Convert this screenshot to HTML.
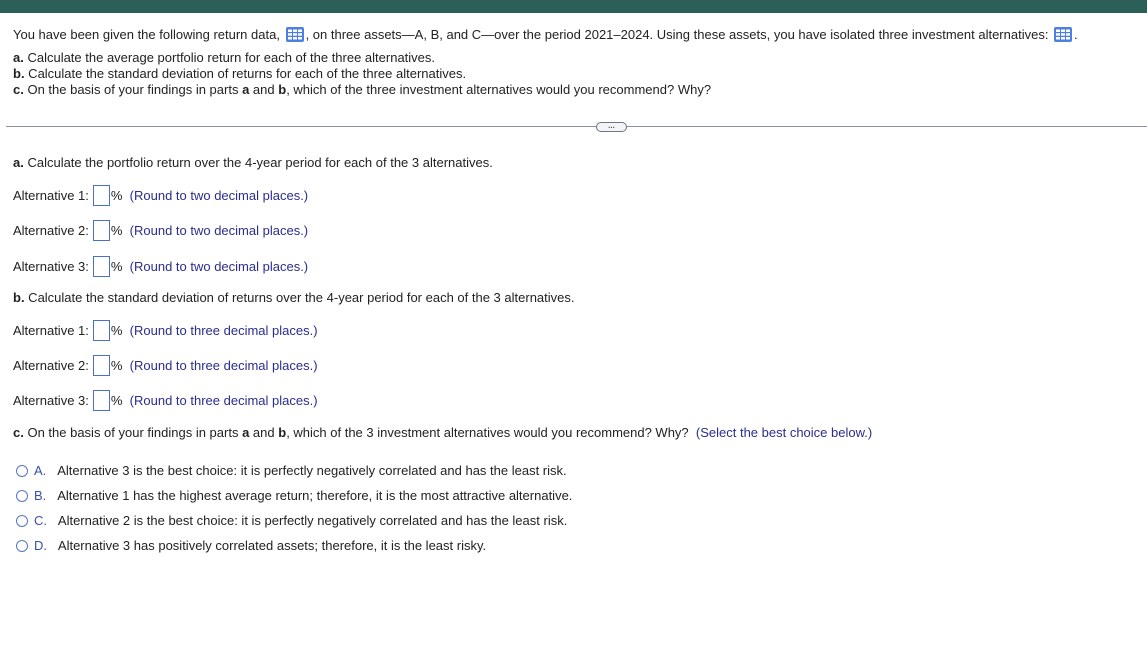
<!DOCTYPE html>
<html><head><style>
body{margin:0;width:1147px;height:671px;background:#fff;font-family:"Liberation Sans",Arial,sans-serif;font-size:13px;color:#222;position:relative;overflow:hidden}
.bar{position:absolute;left:0;top:0;width:1147px;height:13px;background:#2d5f59}
.t{position:absolute;left:13px;white-space:nowrap;line-height:16px}
.blue{color:#2a2d8f}
.box{display:inline-block;width:15px;height:19px;border:1px solid #4b6fd0;vertical-align:middle;margin:0 1px 0 4px;position:relative;top:-1px}
.ic{display:inline-block;width:18px;height:15px;vertical-align:middle;position:relative;top:-1px;margin:0 2px}
.rad{display:inline-block;width:10px;height:10px;border:1.3px solid #5577c8;border-radius:50%;vertical-align:middle;margin-right:6px;position:relative;top:-1px}
.lt{color:#3a4fa8;margin-right:8px}
</style></head><body>
<div class="bar"></div>
<div class="t" style="top:27px">You have been given the following return data, <svg class="ic" viewBox="0 0 18 15"><rect x="0" y="0" width="18" height="15" rx="2" fill="#4d7ee0"/><g fill="#fff"><rect x="2" y="2.5" width="4" height="2.5"/><rect x="7" y="2.5" width="4" height="2.5"/><rect x="12" y="2.5" width="4" height="2.5"/><rect x="2" y="6.2" width="4" height="2.5"/><rect x="7" y="6.2" width="4" height="2.5"/><rect x="12" y="6.2" width="4" height="2.5"/><rect x="2" y="10" width="4" height="2.5"/><rect x="7" y="10" width="4" height="2.5"/><rect x="12" y="10" width="4" height="2.5"/></g></svg>, on three assets—A, B, and C—over the period 2021–2024. Using these assets, you have isolated three investment alternatives: <svg class="ic" viewBox="0 0 18 15"><rect x="0" y="0" width="18" height="15" rx="2" fill="#4d7ee0"/><g fill="#fff"><rect x="2" y="2.5" width="4" height="2.5"/><rect x="7" y="2.5" width="4" height="2.5"/><rect x="12" y="2.5" width="4" height="2.5"/><rect x="2" y="6.2" width="4" height="2.5"/><rect x="7" y="6.2" width="4" height="2.5"/><rect x="12" y="6.2" width="4" height="2.5"/><rect x="2" y="10" width="4" height="2.5"/><rect x="7" y="10" width="4" height="2.5"/><rect x="12" y="10" width="4" height="2.5"/></g></svg>.</div>
<div class="t" style="top:50px"><b>a.</b> Calculate the average portfolio return for each of the three alternatives.</div>
<div class="t" style="top:66px"><b>b.</b> Calculate the standard deviation of returns for each of the three alternatives.</div>
<div class="t" style="top:82px"><b>c.</b> On the basis of your findings in parts <b>a</b> and <b>b</b>, which of the three investment alternatives would you recommend? Why?</div>
<div style="position:absolute;left:6px;top:126px;width:1141px;height:1px;background:#8a90a0"></div>
<div style="position:absolute;left:596px;top:122px;width:29px;height:8px;border:1px solid #6f7585;border-radius:5px;background:#f2f4f7;font-size:8px;line-height:6px;text-align:center;color:#555;font-weight:bold">...</div>
<div class="t" style="top:155px"><b>a.</b> Calculate the portfolio return over the 4-year period for each of the 3 alternatives.</div>
<div class="t" style="top:186px">Alternative 1:<span class="box"></span>% <span class="blue">&nbsp;(Round to two decimal places.)</span></div>
<div class="t" style="top:221px">Alternative 2:<span class="box"></span>% <span class="blue">&nbsp;(Round to two decimal places.)</span></div>
<div class="t" style="top:257px">Alternative 3:<span class="box"></span>% <span class="blue">&nbsp;(Round to two decimal places.)</span></div>
<div class="t" style="top:290px"><b>b.</b> Calculate the standard deviation of returns over the 4-year period for each of the 3 alternatives.</div>
<div class="t" style="top:321px">Alternative 1:<span class="box"></span>% <span class="blue">&nbsp;(Round to three decimal places.)</span></div>
<div class="t" style="top:356px">Alternative 2:<span class="box"></span>% <span class="blue">&nbsp;(Round to three decimal places.)</span></div>
<div class="t" style="top:391px">Alternative 3:<span class="box"></span>% <span class="blue">&nbsp;(Round to three decimal places.)</span></div>
<div class="t" style="top:425px"><b>c.</b> On the basis of your findings in parts <b>a</b> and <b>b</b>, which of the 3 investment alternatives would you recommend? Why? <span class="blue">&nbsp;(Select the best choice below.)</span></div>
<div class="t" style="top:463px;left:16px"><span class="rad"></span><span class="lt">A.</span> Alternative 3 is the best choice: it is perfectly negatively correlated and has the least risk.</div>
<div class="t" style="top:488px;left:16px"><span class="rad"></span><span class="lt">B.</span> Alternative 1 has the highest average return; therefore, it is the most attractive alternative.</div>
<div class="t" style="top:513px;left:16px"><span class="rad"></span><span class="lt">C.</span> Alternative 2 is the best choice: it is perfectly negatively correlated and has the least risk.</div>
<div class="t" style="top:538px;left:16px"><span class="rad"></span><span class="lt">D.</span> Alternative 3 has positively correlated assets; therefore, it is the least risky.</div>
</body></html>
